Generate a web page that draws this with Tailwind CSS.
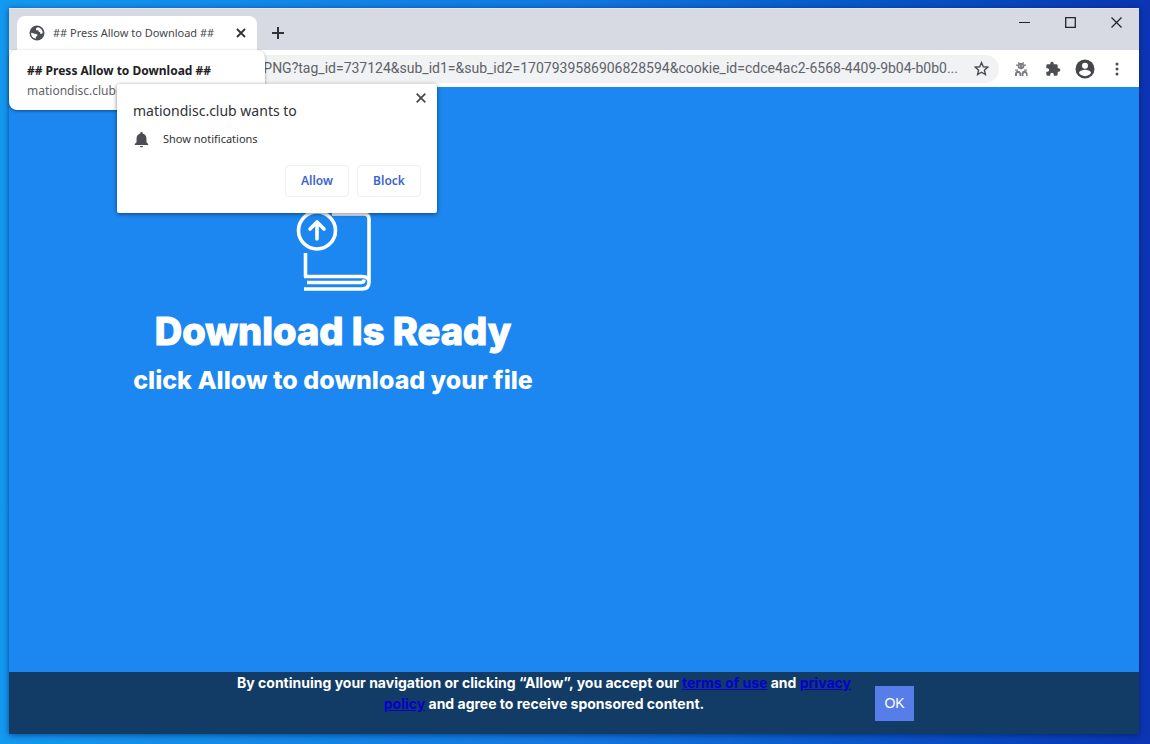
<!DOCTYPE html>
<html lang="en">
<head>
<meta charset="utf-8">
<title>## Press Allow to Download ##</title>
<script src="https://cdn.jsdelivr.net/npm/@tailwindcss/browser@4"></script>
</head>
<body class="min-h-screen flex flex-col pt-2 pb-[10px] pl-[9px] pr-[11px] bg-linear-to-r from-[#1499f0] via-[#1278e0] to-[#0b35b4] font-['Noto_Sans',sans-serif]">
<div class="relative flex-1 flex flex-col shadow-[0_1px_6px_rgba(0,20,70,0.6)]">

  <header class="bg-[#d7dae2] h-[42px] flex items-end pl-2 border-t border-[#e6e6f2]">
    <div class="h-[34px] w-[240px] bg-white rounded-t-lg flex items-center pl-3 pr-[11px] text-[#45484c]">
      <svg class="size-4 shrink-0" viewBox="0 0 16 16"><circle cx="8" cy="8" r="7.5" fill="#4c4f53"/><path fill="#fff" d="M8.500 2.200 7 3.500v1.700h2.300l.6 1.700 1.300.2v1.800l2.500-.6A5.700 5.700 0 0 0 8.500 2.200ZM2.100 7.700l3.700 1.100 2.500.7v1.600l-1.500.7v2A5.800 5.800 0 0 1 2.100 7.700Z"/></svg>
      <span class="ml-2 flex-1 whitespace-nowrap text-[11px]">## Press Allow to Download ##</span>
      <button aria-label="Close tab" class="p-0"><svg class="size-[10px]" viewBox="0 0 10 10" stroke="#303236" stroke-width="1.800"><path d="M1 1l8 8M9 1L1 9"/></svg></button>
    </div>
    <button aria-label="New tab" class="ml-[15px] mb-[11px]"><svg class="size-3" viewBox="0 0 12 12" stroke="#303236" stroke-width="2"><path d="M6 0v12M0 6h12"/></svg></button>
    <div class="ml-auto self-start flex gap-[35px] pr-[17px] pt-2">
      <button aria-label="Minimize"><svg class="size-[11px]" viewBox="0 0 11 11" stroke="#22242c"><path d="M0 5.500h11"/></svg></button>
      <button aria-label="Maximize"><svg class="size-[11px]" viewBox="0 0 11 11" fill="none" stroke="#22242c" stroke-width="1.300"><path d="M.7.7h9.600v9.600H.7z"/></svg></button>
      <button aria-label="Close"><svg class="size-[11px]" viewBox="0 0 11 11" stroke="#22242c" stroke-width="1.300"><path d="M.5.500l10 10M10.500.5l-10 10"/></svg></button>
    </div>
  </header>

  <div class="bg-white h-[37px] flex items-center gap-[14px] pr-[14px]">
    <div class="flex-1 min-w-0 h-7 ml-4 rounded-full bg-[#f1f2f4] flex items-center justify-end gap-4 pr-[10px] overflow-hidden">
      <span class="whitespace-nowrap text-[14px] text-[#606368] font-[Roboto,sans-serif]">PNG?tag_id=737124&amp;sub_id1=&amp;sub_id2=1707939586906828594&amp;cookie_id=cdce4ac2-6568-4409-9b04-b0b0...</span>
      <button aria-label="Bookmark this tab"><svg class="size-[15px]" viewBox="0 0 24 24" fill="none" stroke="#484b50" stroke-width="2.200"><path d="M12 2.500l2.900 6.700 7.200.6-5.500 4.800 1.700 7.100L12 17.900l-6.300 3.800 1.700-7.100-5.500-4.800 7.200-.6z"/></svg></button>
    </div>
    <div class="flex items-center text-[#4b4d52]">
      <button aria-label="Extension"><svg class="size-4 text-[#7b7d80]" viewBox="0 0 16 16" fill="currentColor"><path d="M5 1l2 1h2l2-1-.4 2.500H13v1.300h-1.500L11 7 8 8.500 5 7l-.5-2.200H3V3.500h2.400z"/><path d="M2 15v-3l1.500-2h3L8 12v3H6.500v-2l-1-1-1.500.5V15zM8.500 15v-3l1.500-2h3l1.500 2v3H13v-2.500l-1.500-.5-1 1v2z"/><path d="M2 8.500h3v1.200H2zM11 8.500h3v1.200h-3z"/><path fill="#f1f2f4" d="M6.200 4.500h1v1h-1zM8.800 4.500h1v1h-1z"/></svg></button>
      <button aria-label="Extensions" class="ml-4"><svg class="size-4" viewBox="0 0 24 24" fill="currentColor"><path d="M20.500 11H19V7a2 2 0 0 0-2-2h-4V3.500a2.500 2.500 0 0 0-5 0V5H4a2 2 0 0 0-2 2v3.800h1.500a2.700 2.700 0 0 1 0 5.400H2V20a2 2 0 0 0 2 2h3.800v-1.500a2.700 2.700 0 0 1 5.400 0V22H17a2 2 0 0 0 2-2v-4h1.500a2.500 2.500 0 0 0 0-5z"/></svg></button>
      <button aria-label="Profile" class="ml-[14px]"><svg class="size-5" viewBox="0 0 20 20"><circle cx="10" cy="10" r="9.500" fill="#45474b"/><circle cx="10" cy="6.800" r="3" fill="#fff"/><path fill="#fff" d="M4 14c0-2.400 4-3.200 6-3.200s6 .8 6 3.200a7.300 7.300 0 0 1-12 0z"/></svg></button>
      <button aria-label="Menu" class="ml-[14px]"><svg class="size-4" viewBox="0 0 16 16" fill="currentColor"><circle cx="8" cy="3" r="1.500"/><circle cx="8" cy="8" r="1.500"/><circle cx="8" cy="13" r="1.500"/></svg></button>
    </div>
  </div>

  <main class="flex-1 bg-[#1c87f0]">
    <div class="max-w-[648px] flex flex-col items-center pt-[121px] text-white font-[Inter,sans-serif] font-extrabold whitespace-nowrap">
      <svg class="w-[76px] h-[84px] ml-[2px]" viewBox="0 0 76 84" fill="none" stroke="#fff" stroke-width="3.600" stroke-linecap="round">
        <circle cx="21" cy="22.500" r="18.500"/>
        <path d="M21 31V15M14 21l7-7 7 7" stroke-linejoin="round"/>
        <path stroke-linecap="butt" d="M9.500 45v24M36 6h32q5 0 5 5v63q0 7-7 7H8M8 68.500h58q7 0 7 5M11 74.500h54q3 0 3-3"/>
      </svg>
      <h1 class="mt-[13px] text-[38px] leading-[52px] [-webkit-text-stroke:1px_white] [stroke-linejoin:round]">Download Is Ready</h1>
      <h2 class="mt-[7px] text-[25px] leading-8">click Allow to download your file</h2>
    </div>
  </main>

  <footer class="h-[62px] bg-[#123b66] flex justify-center gap-[21px]">
    <p class="w-[620px] text-center text-white font-[Inter,sans-serif] font-bold text-[14px] leading-[21px]">By continuing your navigation or clicking “Allow”, you accept our <a href="#" class="text-[#0202d0] underline">terms of use</a> and <a href="#" class="text-[#0202d0] underline">privacy policy</a> and agree to receive sponsored content.</p>
    <button class="mt-[14px] w-[39px] h-[35px] bg-[#567de8] text-white text-[14px] font-['Liberation_Sans',sans-serif]">OK</button>
  </footer>

  <div class="absolute left-0 top-[42px] w-[256px] h-[60px] bg-white rounded-lg shadow-[0_1px_3px_rgba(0,0,0,0.45)] pl-[18px] pt-[11px]">
    <p class="text-[12px] leading-5 font-bold text-[#202124] whitespace-nowrap">## Press Allow to Download ##</p>
    <p class="text-[12px] leading-5 text-[#606368]">mationdisc.club</p>
  </div>

  <section aria-label="Permission request" class="absolute left-[108px] top-[76px] w-[320px] h-[129px] bg-white rounded-xs shadow-[0_1px_4px_rgba(0,0,0,0.5)] px-4 pt-4 text-[#303236]">
    <button aria-label="Dismiss" class="absolute right-[11px] top-[9px]"><svg class="size-[10px]" viewBox="0 0 10 10" stroke="#45474b" stroke-width="1.700"><path d="M.7.7l8.600 8.600M9.300.7L.7 9.300"/></svg></button>
    <h3 class="text-[14px] leading-[22px]">mationdisc.club wants to</h3>
    <div class="mt-[7px] flex items-center gap-[13px] text-[11px] leading-5"><svg class="size-[17px]" viewBox="0 0 24 24" fill="#4b4d52"><path d="M12 23c1.200 0 2.200-.8 2.200-2H9.800c0 1.200 1 2 2.200 2zm7-7v-5.500c0-3.500-2-6.200-5.300-7V3a1.700 1.700 0 0 0-3.400 0v.5C7 4.300 5 7 5 10.500V16l-2.500 2.500v1.300h19v-1.300z"/></svg>Show notifications</div>
    <div class="mt-4 flex justify-end gap-2 text-[12px] font-semibold text-[#3d63cc]">
      <button class="w-16 h-8 border border-[#eef0f4] rounded-sm">Allow</button>
      <button class="w-16 h-8 border border-[#eef0f4] rounded-sm">Block</button>
    </div>
  </section>
</div>
</body>
</html>
